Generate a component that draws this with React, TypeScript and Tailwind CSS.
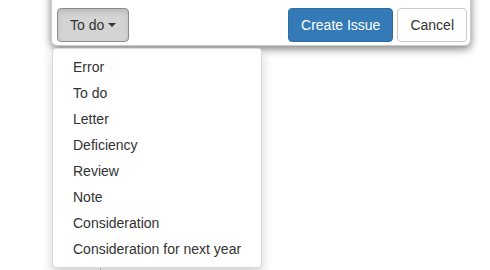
import React from 'react';

const issueTypes = [
  'Error',
  'To do',
  'Letter',
  'Deficiency',
  'Review',
  'Note',
  'Consideration',
  'Consideration for next year',
];

export default function App() {
  return (
    <div
      className="relative h-[270px] w-[490px] overflow-hidden bg-white text-[14px] text-[#333]"
      style={{ fontFamily: '"Liberation Sans", Arial, sans-serif' }}
    >
      {/* something behind the dropdown */}
      <div className="absolute left-[100px] top-[240px] h-[40px] w-px bg-[#ccc]" />

      {/* modal footer */}
      <div className="relative ml-[51px] mt-[-20px] w-[420px] rounded-b-[6px] border border-[rgba(0,0,0,0.2)] bg-white pb-[3px] pl-[5px] pr-[3px] pt-[27px] shadow-[0_3px_9px_rgba(0,0,0,0.5)]">
        <div className="flex items-center">
          <button
            type="button"
            className="flex h-[34px] items-center gap-[4px] rounded-[4px] border border-[#8c8c8c] bg-[#d4d4d4] px-[12px] leading-[20px] text-[#333] shadow-[inset_0_3px_5px_rgba(0,0,0,0.125)]"
          >
            To do
            <span className="h-0 w-0 border-x-[4px] border-t-[4px] border-x-transparent border-t-[#333]" />
          </button>
          <div className="ml-auto flex gap-[4px]">
            <button
              type="button"
              className="h-[34px] rounded-[4px] border border-[#2e6da4] bg-[#337ab7] px-[12px] leading-[20px] text-white"
            >
              Create Issue
            </button>
            <button
              type="button"
              className="h-[34px] rounded-[4px] border border-[#ccc] bg-white px-[12px] leading-[20px] text-[#333]"
            >
              Cancel
            </button>
          </div>
        </div>
      </div>

      {/* dropdown */}
      <ul className="absolute left-[52px] top-[48px] w-[210px] rounded-[4px] border border-[rgba(0,0,0,0.15)] bg-white py-[5px] shadow-[0_6px_12px_rgba(0,0,0,0.175)]">
        {issueTypes.map((t) => (
          <li key={t} className="whitespace-nowrap px-[20px] py-[3px] leading-[20px] text-[#333]">
            {t}
          </li>
        ))}
      </ul>
    </div>
  );
}
